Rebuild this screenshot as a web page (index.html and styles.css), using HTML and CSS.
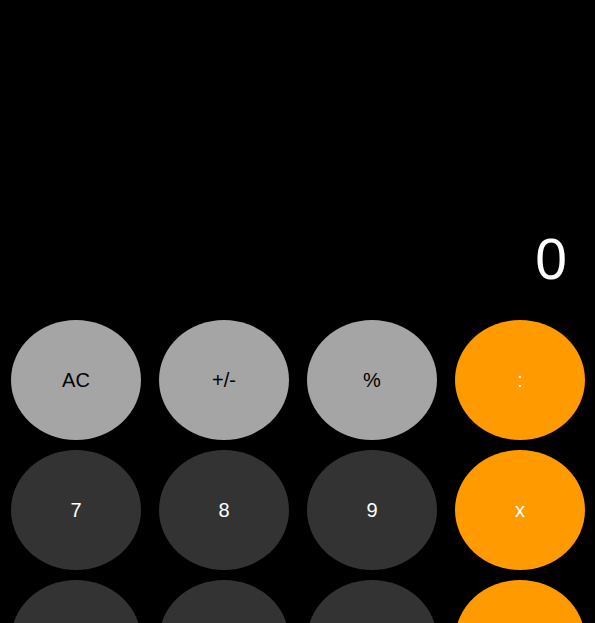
FILE: index.html
```html
<!DOCTYPE html>
<html>
<head>
<meta charset="utf-8">
<link rel="stylesheet" href="styles.css">
</head>
<body>
<div class="calc">
  <div class="display"><span class="value">0</span></div>
  <div class="keys">
    <div class="key light">AC</div>
    <div class="key light">+/-</div>
    <div class="key light">%</div>
    <div class="key op">:</div>
    <div class="key dark">7</div>
    <div class="key dark">8</div>
    <div class="key dark">9</div>
    <div class="key op">x</div>
    <div class="key dark">4</div>
    <div class="key dark">5</div>
    <div class="key dark">6</div>
    <div class="key op">-</div>
    <div class="key dark">1</div>
    <div class="key dark">2</div>
    <div class="key dark">3</div>
    <div class="key op">+</div>
    <div class="key dark">0</div>
    <div class="key dark">,</div>
    <div class="key dark">.</div>
    <div class="key op">=</div>
  </div>
</div>
</body>
</html>
```
FILE: styles.css
```css
html, body {
  margin: 0;
  padding: 0;
  background: #000;
  height: 100%;
  overflow: hidden;
}
.calc {
  font-family: "Liberation Sans", Arial, sans-serif;
}
.display {
  height: 310px;
  display: flex;
  align-items: flex-end;
  justify-content: flex-end;
  padding-right: 28px;
  box-sizing: border-box;
}
.value {
  color: #fff;
  font-size: 57px;
  line-height: 1;
  padding-bottom: 22px;
}
.keys {
  display: grid;
  grid-template-columns: repeat(4, 130px);
  grid-auto-rows: 120px;
  column-gap: 18px;
  row-gap: 10px;
  padding: 10px 0 0 11px;
}
.key {
  border-radius: 50%;
  display: flex;
  align-items: center;
  justify-content: center;
  font-size: 20px;
}
.light { background: #a5a5a5; color: #000; }
.dark { background: #333; color: #fff; }
.op { background: #ff9a00; color: #fff; }
```
